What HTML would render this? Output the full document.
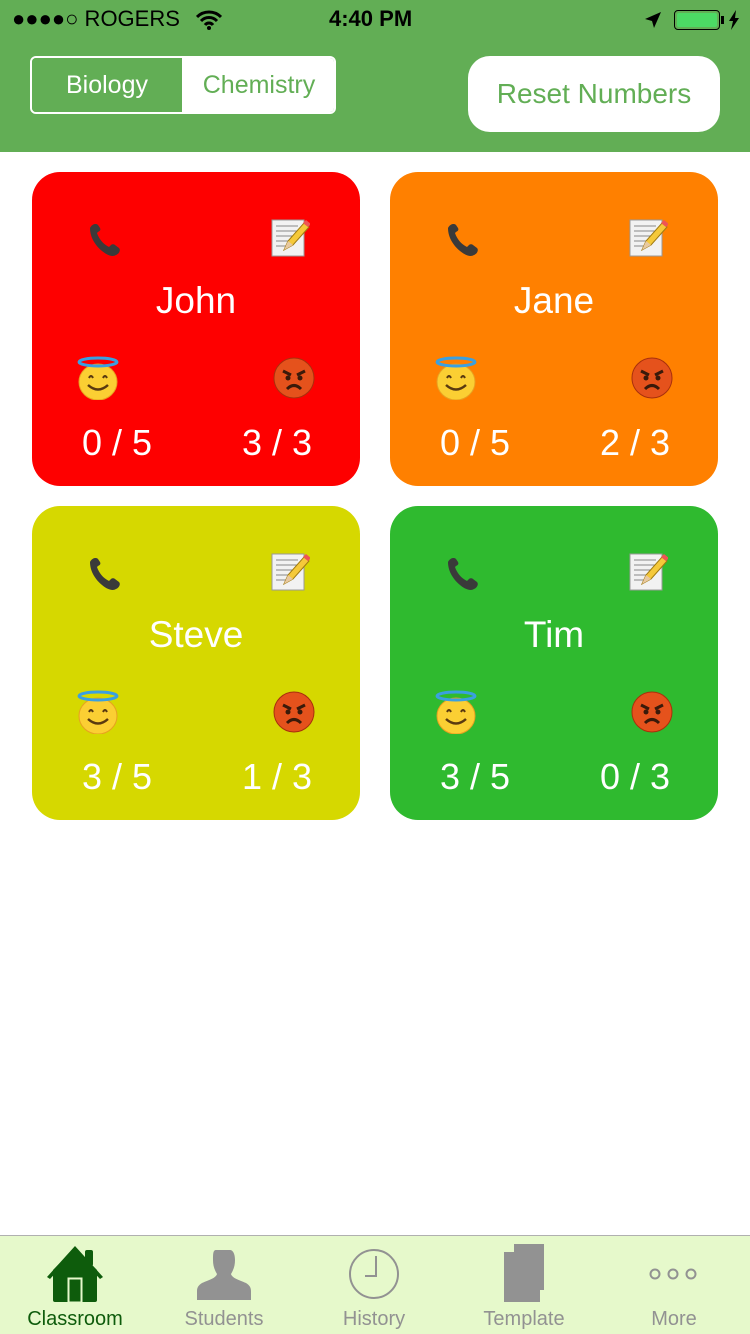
<!DOCTYPE html>
<html><head><meta charset="utf-8"><style>
*{margin:0;padding:0;box-sizing:border-box}
body{width:750px;height:1334px;position:relative;background:#fff;font-family:"Liberation Sans",sans-serif;overflow:hidden}
.hdr{position:absolute;left:0;top:0;width:750px;height:152px;background:#62ae55}
.sb{position:absolute;top:6px;font-size:22px;color:#000}
.seg{position:absolute;left:30px;top:56px;width:306px;height:58px;border:2px solid #fff;border-radius:6px;overflow:hidden;display:flex}
.seg div{flex:none;height:100%;display:flex;align-items:center;justify-content:center;font-size:25px}
.reset{position:absolute;left:468px;top:56px;width:252px;height:76px;background:#fff;border-radius:22px;color:#62ae55;font-size:28px;display:flex;align-items:center;justify-content:center}
.card{position:absolute;width:328px;height:314px;border-radius:28px;color:#fff}
.card svg{position:absolute}
.name{position:absolute;left:0;width:100%;top:108px;text-align:center;font-size:37px}
.sc{position:absolute;top:250px;font-size:36px;width:140px;text-align:center}
.tab{position:absolute;left:0;top:1235px;width:750px;height:99px;background:#e6f9cb;border-top:1px solid #b0b0b0}
.tl{position:absolute;top:1308px;font-size:20px;color:#929292;width:150px;text-align:center}
</style></head><body>
<svg width="0" height="0" style="position:absolute">
<defs>
<symbol id="phone" viewBox="0 0 44 40"><path d="M6 8c2-4 6-5 8-3l2 3c1 2 0 3-2 4l-1 1c2 6 6 11 12 14l2-2c1-1 3-1 4 0l4 3c2 2 0 6-3 7-3 2-8 1-14-4C12 26 6 18 6 8z" fill="#3a3a3a"/></symbol>
<symbol id="note" viewBox="0 0 40 40"><rect x="2" y="2" width="32" height="36" fill="#f2f2f2" stroke="#999"/><g stroke="#888" stroke-width="1"><line x1="6" y1="8" x2="28" y2="8"/><line x1="6" y1="13" x2="28" y2="13"/><line x1="6" y1="18" x2="24" y2="18"/><line x1="6" y1="23" x2="20" y2="23"/><line x1="6" y1="28" x2="16" y2="28"/></g><path d="M14 32l4-9 16-18 5 4-16 18z" fill="#f5c93a" stroke="#a07a10"/><path d="M33 5l3-3 5 4-3 3z" fill="#e55"/><path d="M14 32l4-9 5 4z" fill="#e8c9a0"/></symbol>
<symbol id="angel" viewBox="0 0 44 44"><ellipse cx="22" cy="26" rx="19" ry="18" fill="#fbcf33" stroke="#e8a020"/><ellipse cx="22" cy="6" rx="19" ry="4" fill="none" stroke="#3aa0e0" stroke-width="3"/><path d="M13 22q2-4 4 0M27 22q2-4 4 0" stroke="#5a3a10" stroke-width="2" fill="none"/><path d="M12 29q10 9 20 0" stroke="#5a3a10" stroke-width="2.5" fill="none"/></symbol>
<symbol id="angry" viewBox="0 0 44 44"><circle cx="22" cy="22" r="20" fill="#e5521c" stroke="#a8300c"/><path d="M11 15l8 4M33 15l-8 4" stroke="#3a1a0a" stroke-width="3"/><circle cx="16" cy="22" r="2.5" fill="#3a1a0a"/><circle cx="28" cy="22" r="2.5" fill="#3a1a0a"/><path d="M15 33q7-7 14 0" stroke="#3a1a0a" stroke-width="3" fill="none"/></symbol>
</defs></svg>

<div class="hdr">
<div class="sb" style="left:12px">●●●●○ ROGERS</div>
<svg style="position:absolute;left:196px;top:10px" width="26" height="20" viewBox="0 0 26 20"><path d="M1 7a17 17 0 0 1 24 0M5 11a11 11 0 0 1 16 0M9 15a5 5 0 0 1 8 0" stroke="#000" stroke-width="3" fill="none"/><circle cx="13" cy="18" r="2" fill="#000"/></svg>
<div class="sb" style="left:329px;font-weight:bold">4:40 PM</div>
<svg style="position:absolute;left:644px;top:11px" width="18" height="18" viewBox="0 0 18 18"><path d="M17 1L1 8l7 2 2 7z" fill="#000"/></svg>
<div style="position:absolute;left:674px;top:10px;width:46px;height:20px;border:1.5px solid #000;border-radius:4px;padding:2px"><div style="width:100%;height:100%;background:#4cd964;border-radius:2px"></div></div>
<div style="position:absolute;left:721px;top:16px;width:3px;height:8px;background:#000"></div>
<svg style="position:absolute;left:728px;top:10px" width="12" height="20" viewBox="0 0 12 20"><path d="M8 0L1 11h4l-2 9 8-12H7z" fill="#000"/></svg>
<div class="seg"><div style="width:150px;background:#62ae55;color:#fff">Biology</div><div style="width:154px;background:#fff;color:#62ae55">Chemistry</div></div>
<div class="reset">Reset Numbers</div>
</div>

<!-- cards -->
<div class="card" style="left:32px;top:172px;background:#fe0000">
<svg style="left:52px;top:48px" width="44" height="40"><use href="#phone"/></svg>
<svg style="left:238px;top:46px" width="40" height="40"><use href="#note"/></svg>
<div class="name">John</div>
<svg style="left:44px;top:184px" width="44" height="44"><use href="#angel"/></svg>
<svg style="left:240px;top:184px" width="44" height="44"><use href="#angry"/></svg>
<div class="sc" style="left:15px">0 / 5</div><div class="sc" style="left:175px">3 / 3</div>
</div>
<div class="card" style="left:390px;top:172px;background:#ff8000">
<svg style="left:52px;top:48px" width="44" height="40"><use href="#phone"/></svg>
<svg style="left:238px;top:46px" width="40" height="40"><use href="#note"/></svg>
<div class="name">Jane</div>
<svg style="left:44px;top:184px" width="44" height="44"><use href="#angel"/></svg>
<svg style="left:240px;top:184px" width="44" height="44"><use href="#angry"/></svg>
<div class="sc" style="left:15px">0 / 5</div><div class="sc" style="left:175px">2 / 3</div>
</div>
<div class="card" style="left:32px;top:506px;background:#d6d800">
<svg style="left:52px;top:48px" width="44" height="40"><use href="#phone"/></svg>
<svg style="left:238px;top:46px" width="40" height="40"><use href="#note"/></svg>
<div class="name">Steve</div>
<svg style="left:44px;top:184px" width="44" height="44"><use href="#angel"/></svg>
<svg style="left:240px;top:184px" width="44" height="44"><use href="#angry"/></svg>
<div class="sc" style="left:15px">3 / 5</div><div class="sc" style="left:175px">1 / 3</div>
</div>
<div class="card" style="left:390px;top:506px;background:#2fba2f">
<svg style="left:52px;top:48px" width="44" height="40"><use href="#phone"/></svg>
<svg style="left:238px;top:46px" width="40" height="40"><use href="#note"/></svg>
<div class="name">Tim</div>
<svg style="left:44px;top:184px" width="44" height="44"><use href="#angel"/></svg>
<svg style="left:240px;top:184px" width="44" height="44"><use href="#angry"/></svg>
<div class="sc" style="left:15px">3 / 5</div><div class="sc" style="left:175px">0 / 3</div>
</div>

<div class="tab"></div>
<svg style="position:absolute;left:45px;top:1244px" width="60" height="60" viewBox="45 1244 60 60">
<path d="M47 1277L75 1246 103 1277 100 1279 75 1252 50 1279z" fill="#0e5c0c"/>
<rect x="85" y="1250" width="8" height="16" rx="2" fill="#0e5c0c"/>
<path d="M53 1270L75 1248 97 1270V1300a2 2 0 0 1-2 2H55a2 2 0 0 1-2-2z" fill="#0e5c0c"/>
<rect x="68.5" y="1278.5" width="13" height="24" fill="none" stroke="#e6f9cb" stroke-width="2"/>
</svg>
<svg style="position:absolute;left:196px;top:1248px" width="56" height="54" viewBox="0 0 56 54"><path d="M20 2h14c3 0 5 4 5 10 0 5-1 9-4 14 1 4 8 6 15 9 3 2 5 4 5 8v9H1v-9c0-4 2-6 5-8 7-3 14-5 15-9-3-5-4-9-4-14 0-6 0-10 3-10z" fill="#929292"/></svg>
<svg style="position:absolute;left:348px;top:1248px" width="54" height="54" viewBox="0 0 54 54"><circle cx="26" cy="26" r="24" fill="none" stroke="#929292" stroke-width="2"/><path d="M28 8v20H17" stroke="#929292" stroke-width="2" fill="none"/></svg>
<svg style="position:absolute;left:500px;top:1244px" width="48" height="60" viewBox="0 0 48 60"><path d="M14 0h30v46h-4v12H4V8h10z" fill="#929292"/></svg>
<svg style="position:absolute;left:648px;top:1266px" width="50" height="16" viewBox="0 0 50 16"><g fill="none" stroke="#929292" stroke-width="2"><circle cx="7" cy="8" r="4.5"/><circle cx="25" cy="8" r="4.5"/><circle cx="43" cy="8" r="4.5"/></g></svg>
<div class="tl" style="left:0;color:#0e5c0c">Classroom</div>
<div class="tl" style="left:149px">Students</div>
<div class="tl" style="left:299px">History</div>
<div class="tl" style="left:449px">Template</div>
<div class="tl" style="left:599px">More</div>
</body></html>
